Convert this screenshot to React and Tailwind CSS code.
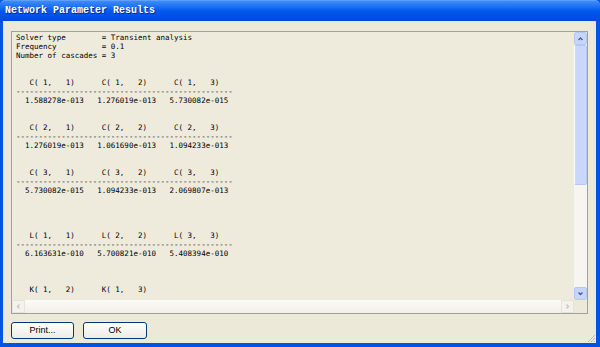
import React from "react";

const lines = [
  "Solver type        = Transient analysis",
  "Frequency          = 0.1",
  "Number of cascades = 3",
  "",
  "",
  "   C( 1,   1)      C( 1,   2)      C( 1,   3)",
  "------------------------------------------------",
  "  1.588278e-013   1.276019e-013   5.730082e-015",
  "",
  "",
  "   C( 2,   1)      C( 2,   2)      C( 2,   3)",
  "------------------------------------------------",
  "  1.276019e-013   1.061690e-013   1.094233e-013",
  "",
  "",
  "   C( 3,   1)      C( 3,   2)      C( 3,   3)",
  "------------------------------------------------",
  "  5.730082e-015   1.094233e-013   2.069807e-013",
  "",
  "",
  "",
  "",
  "   L( 1,   1)      L( 2,   2)      L( 3,   3)",
  "------------------------------------------------",
  "  6.163631e-010   5.700821e-010   5.408394e-010",
  "",
  "",
  "",
  "   K( 1,   2)      K( 1,   3)",
];

const Chevron = ({ dir, color = "#4d6185" }) => {
  const pts = {
    up: "2.5,6 4.5,4 6.5,6",
    down: "2.5,3.5 4.5,5.5 6.5,3.5",
    left: "5.5,2.5 3.5,4.5 5.5,6.5",
    right: "3.5,2.5 5.5,4.5 3.5,6.5",
  }[dir];
  return (
    <svg width="9" height="9" viewBox="0 0 9 9">
      <polyline points={pts} fill="none" stroke={color} strokeWidth="1.4" />
    </svg>
  );
};

const App = () => {
  return (
    <div className="w-[600px] h-[347px] flex flex-col overflow-hidden bg-[#0054e3]">
      {/* title bar */}
      <div className="h-[21px] shrink-0 flex items-center pl-[5px] rounded-t-[5px] bg-linear-to-b from-[#3d8cfb] via-[#0058ee] to-[#0048dc] border-t border-[#5ea0ff]">
        <span
          className="text-white font-bold text-[10px] leading-none [text-shadow:1px_1px_0_#0a2a8a]"
          style={{ fontFamily: '"Liberation Mono", "DejaVu Sans Mono", monospace' }}
        >
          Network Parameter Results
        </span>
      </div>

      {/* client area */}
      <div className="relative flex-1 flex flex-col ml-[3px] mr-[4px] mb-[4px] bg-[#ece9d8] px-[8px] pt-[10px]">
        <div className="h-[283px] border border-[#a0a0a0] flex flex-col bg-[#eeebdd]">
          <div className="flex flex-1 min-h-0">
            <div
              className="flex-1 overflow-hidden pl-[4px] pt-[1px] text-[7.5px] leading-[9px] text-black whitespace-pre"
              style={{ fontFamily: '"DejaVu Sans Mono", "Liberation Mono", monospace' }}
            >
              {lines.map((l, i) => (
                <div key={i} className="h-[9px]">
                  {l}
                </div>
              ))}
            </div>
            {/* vertical scrollbar */}
            <div className="w-[13px] flex flex-col bg-[#f6f5ef]">
              <div className="h-[13px] flex items-center justify-center rounded-[2px] bg-[#c6d6fb] border border-[#b4c8f6]">
                <Chevron dir="up" />
              </div>
              <div className="h-[140px] rounded-[2px] bg-[#c8d7fb] border border-[#b4c8f6] border-l-white" />
              <div className="flex-1" />
              <div className="h-[13px] flex items-center justify-center rounded-[2px] bg-[#c6d6fb] border border-[#b4c8f6]">
                <Chevron dir="down" />
              </div>
            </div>
          </div>
          {/* horizontal scrollbar */}
          <div className="h-[13px] flex">
            <div className="flex-1 flex bg-linear-to-b from-[#fbfbf8] to-[#f1efe6]">
              <div className="w-[13px] flex items-center justify-center border border-[#e6e4da] bg-[#f3f2ec]">
                <Chevron dir="left" color="#c9c7ba" />
              </div>
              <div className="flex-1" />
              <div className="w-[13px] flex items-center justify-center border border-[#e6e4da] bg-[#f3f2ec]">
                <Chevron dir="right" color="#c9c7ba" />
              </div>
            </div>
            <div className="w-[13px] bg-[#ece9d8]" />
          </div>
        </div>

        {/* buttons */}
        <div
          className="flex gap-[9px] mt-[8px] text-[9px] text-black"
          style={{ fontFamily: '"Liberation Sans", Arial, sans-serif' }}
        >
          <button className="w-[63px] h-[17px] rounded-[3px] border border-[#003c74] bg-linear-to-b from-white to-[#ecebe6] leading-none">
            Print...
          </button>
          <button className="w-[64px] h-[17px] rounded-[3px] border border-[#003c74] bg-linear-to-b from-white to-[#ecebe6] leading-none">
            OK
          </button>
        </div>

        {/* resize grip */}
        <svg className="absolute right-0 bottom-0" width="10" height="10" viewBox="0 0 10 10">
          <line x1="9" y1="2" x2="2" y2="9" stroke="#c3bfa6" strokeWidth="1" />
          <line x1="9" y1="5" x2="5" y2="9" stroke="#c3bfa6" strokeWidth="1" />
          <line x1="9" y1="8" x2="8" y2="9" stroke="#c3bfa6" strokeWidth="1" />
        </svg>
      </div>
    </div>
  );
};

export default App;
